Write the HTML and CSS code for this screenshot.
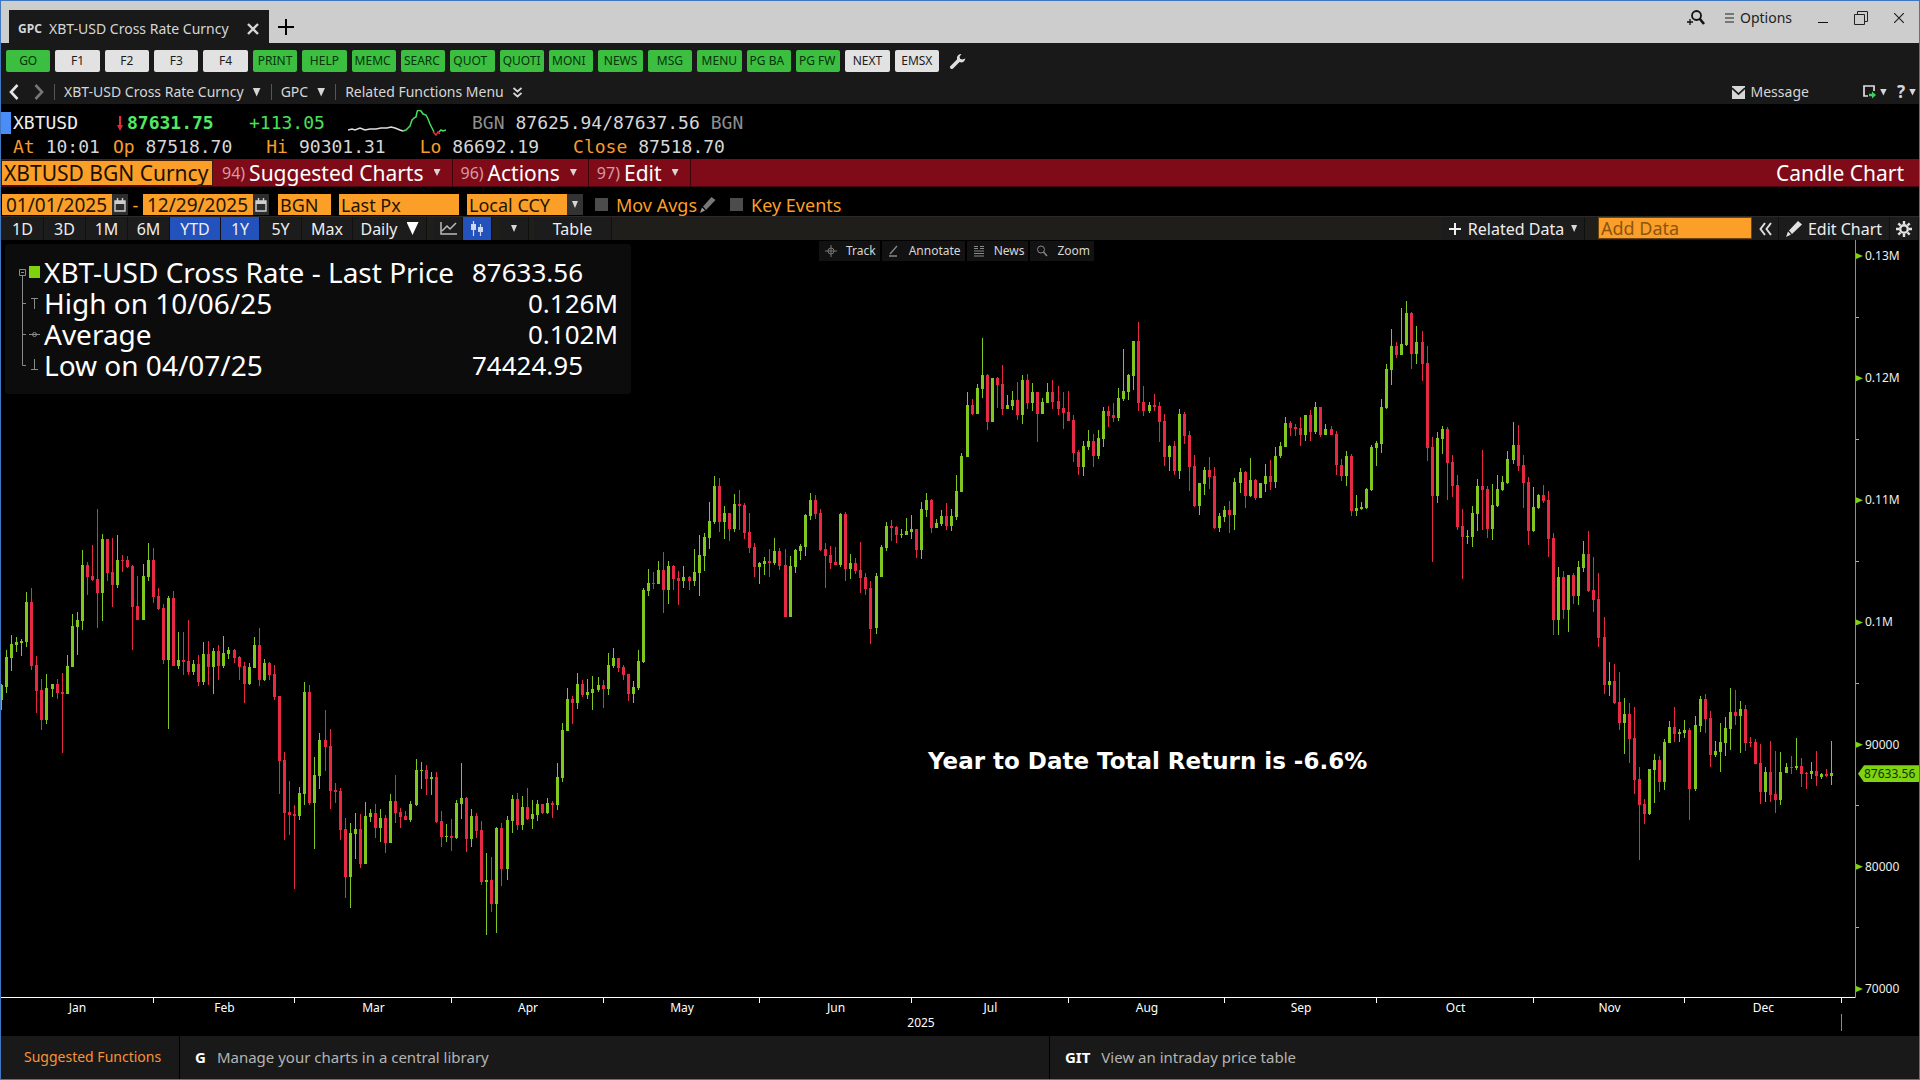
FILE: index.html
```html
<!DOCTYPE html>
<html lang="en">
<head>
<meta charset="utf-8">
<title>GPC XBT-USD Cross Rate Curncy</title>
<link rel="stylesheet" href="styles.css">
</head>
<body>
<div class="window">
  <header class="titlebar">
    <div class="tab">
      <strong class="tab-code">GPC</strong>
      <span class="tab-name">XBT-USD Cross Rate Curncy</span>
      <button class="icon-btn tab-close" aria-label="Close tab"><svg width="12" height="12" viewBox="0 0 12 12"><path d="M1 1L11 11M11 1L1 11" stroke="#d6d6d6" stroke-width="2.4"/></svg></button>
    </div>
    <button class="icon-btn tab-add" aria-label="New tab"><svg width="16" height="16" viewBox="0 0 16 16"><path d="M8 0V16M0 8H16" stroke="#000" stroke-width="2"/></svg></button>
    <div class="window-tools">
      <button class="icon-btn" aria-label="Find"><svg width="18" height="16" viewBox="0 0 18 16"><g fill="none" stroke="#111"><circle cx="9.500" cy="5.500" r="4.500" stroke-width="1.800"/><path d="M12.500 8.500L17 14" stroke-width="2.600"/><path d="M3 9V15M0 12H6" stroke-width="1.300"/></g></svg></button>
      <button class="options"><svg width="9" height="10" viewBox="0 0 9 10"><path d="M0 1H9M0 5H9M0 9H9" stroke="#222" stroke-width="1.200"/></svg>Options</button>
      <button class="icon-btn" aria-label="Minimize"><svg width="10" height="14" viewBox="0 0 10 14"><path d="M0 11.500H10" stroke="#111"/></svg></button>
      <button class="icon-btn" aria-label="Restore"><svg width="14" height="14" viewBox="0 0 14 14"><path d="M.5 3.500H10.500V13.500H.5ZM3.500 3V.5H13.500V10.500H11" fill="none" stroke="#222"/></svg></button>
      <button class="icon-btn" aria-label="Close"><svg width="10" height="10" viewBox="0 0 10 10"><path d="M0 0L10 10M10 0L0 10" stroke="#222" stroke-width="1.200"/></svg></button>
    </div>
  </header>

  <div class="keys">
    <div class="key-grid">
      <button class="key go">GO</button><button class="key">F1</button><button class="key">F2</button><button class="key">F3</button><button class="key">F4</button><button class="key go">PRINT</button><button class="key go">HELP</button><button class="key go cut">MEMC</button><button class="key go cut">SEARC</button><button class="key go cut">QUOT</button><button class="key go cut">QUOTI</button><button class="key go cut">MONI</button><button class="key go">NEWS</button><button class="key go">MSG</button><button class="key go">MENU</button><button class="key go cut">PG BA</button><button class="key go cut">PG FW</button><button class="key">NEXT</button><button class="key">EMSX</button>
    </div>
    <button class="icon-btn" aria-label="Settings"><svg width="16" height="16" viewBox="0 0 16 16"><path d="M1.800 14.200L8.500 7.500" stroke="#dedede" stroke-width="3.600" stroke-linecap="round"/><path d="M11.500 1A4.200 4.200 0 1 0 15.300 5.500L12.400 6.500L10 5.800L9.600 3.400Z" fill="#dedede"/></svg></button>
  </div>

  <nav class="crumbs">
    <button class="icon-btn back" aria-label="Back"><svg width="10" height="16" viewBox="0 0 10 16"><path d="M8.500 1L2 8L8.500 15" fill="none" stroke="#e4e4e4" stroke-width="2.600"/></svg></button>
    <button class="icon-btn forward" aria-label="Forward"><svg width="10" height="16" viewBox="0 0 10 16"><path d="M1.500 1L8 8L1.500 15" fill="none" stroke="#777" stroke-width="2.600"/></svg></button>
    <button class="crumb">XBT-USD Cross Rate Curncy<i class="caret"></i></button>
    <button class="crumb">GPC<i class="caret"></i></button>
    <button class="crumb">Related Functions Menu<svg width="9" height="11" viewBox="0 0 9 11"><path d="M.5 1L4.500 4.500L8.500 1M.5 6L4.500 9.500L8.500 6" fill="none" stroke="#d6d6d6" stroke-width="1.700"/></svg></button>
    <div class="crumb-tools">
      <button class="message"><svg width="13" height="13" viewBox="0 0 13 13"><path d="M0 0H13V13H0Z" fill="#d6d6d6"/><path d="M0 2L6.500 8L13 2" fill="none" stroke="#191919" stroke-width="1.700"/></svg>Message</button>
      <button class="menu-btn" aria-label="Export"><svg width="13" height="14" viewBox="0 0 13 14"><path d="M5 11H1V1H11V6" fill="none" stroke="#dedede" stroke-width="1.700"/><path d="M6 8.800H9V6.500L13 10L9 13.500V11.300H6Z" fill="#3fd05c"/></svg><i class="caret small"></i></button>
      <button class="menu-btn help"><b>?</b><i class="caret small"></i></button>
    </div>
  </nav>

  <section class="quote">
    <div class="quote-row">
      <i class="marker"></i><span class="q-symbol">XBTUSD</span>
      <svg class="down" width="6" height="15" viewBox="0 0 6 15"><path d="M3 0V12" stroke="#e32a36" stroke-width="2"/><path d="M0 9H6L3 15Z" fill="#e32a36"/></svg>
      <b class="q-last">87631.75</b><span class="q-change">+113.05</span>
      <svg class="spark" width="98" height="26" viewBox="0 0 98 26"><g fill="none" stroke-width="1.500"><path d="M0 20L4 19L7 20L12 18L17 20L22 19L28 19L33 18L39 18L43 17L47 18L52 20L55 21" stroke="#ddd"/><path d="M55 21L58 20L60 18L62 16L64 10L66 8L68 7L69 2L70 0L73 1L75 4L78 5L80 9L82 14L84 18L86 22M91 22L93 20L95 21L98 20" stroke="#45e05a"/><path d="M85 22L88 25L90 22L92 24" stroke="#e32a36"/></g></svg>
      <span class="dim">BGN</span><span>87625.94/87637.56</span><span class="dim">BGN</span>
    </div>
    <dl class="quote-row stats">
      <div><dt>At</dt><dd>10:01</dd></div>
      <div><dt>Op</dt><dd>87518.70</dd></div>
      <div><dt>Hi</dt><dd>90301.31</dd></div>
      <div><dt>Lo</dt><dd>86692.19</dd></div>
      <div><dt>Close</dt><dd>87518.70</dd></div>
    </dl>
  </section>

  <div class="menubar">
    <input class="security" aria-label="Security" value="XBTUSD BGN Curncy">
    <button class="menu"><span class="num">94)</span>Suggested Charts<i class="caret small"></i></button>
    <button class="menu"><span class="num">96)</span>Actions<i class="caret small"></i></button>
    <button class="menu"><span class="num">97)</span>Edit<i class="caret small"></i></button>
    <h1 class="page-name">Candle Chart</h1>
  </div>

  <form class="fields">
    <input class="field date" aria-label="From" value="01/01/2025"><button type="button" class="cal" aria-label="Pick start date"><svg width="12" height="14" viewBox="0 0 12 14"><path d="M1 3H11V13H1ZM3.500 0V4M8.500 0V4" fill="none" stroke="#cfcfcf" stroke-width="1.400"/><path d="M1 3H11V6H1Z" fill="#cfcfcf"/></svg></button>
    <span class="dash">-</span>
    <input class="field date" aria-label="To" value="12/29/2025"><button type="button" class="cal" aria-label="Pick end date"><svg width="12" height="14" viewBox="0 0 12 14"><path d="M1 3H11V13H1ZM3.500 0V4M8.500 0V4" fill="none" stroke="#cfcfcf" stroke-width="1.400"/><path d="M1 3H11V6H1Z" fill="#cfcfcf"/></svg></button>
    <input class="field source" aria-label="Source" value="BGN">
    <input class="field price" aria-label="Price type" value="Last Px">
    <label class="ccy"><select class="field" aria-label="Currency"><option>Local CCY</option></select><i class="drop"><i class="caret tiny"></i></i></label>
    <label class="check"><input type="checkbox">Mov Avgs<svg width="16" height="18" viewBox="0 0 16 18"><path d="M0 17L2 11.500L5 14.500Z" fill="#999"/><path d="M3 10.500L11.500 1L15.500 4L6 14Z" fill="#777"/></svg></label>
    <label class="check"><input type="checkbox">Key Events</label>
  </form>

  <div class="toolbar">
    <button class="tool w-s">1D</button><button class="tool w-s">3D</button><button class="tool w-s">1M</button><button class="tool w-s">6M</button><button class="tool w-m on">YTD</button><button class="tool w-n on">1Y</button><button class="tool w-s">5Y</button><button class="tool w-m">Max</button>
    <button class="tool daily">Daily<i class="caret large"></i></button>
    <button class="tool w-i" aria-label="Line chart"><svg width="17" height="13" viewBox="0 0 17 13"><path d="M1 0V12H17M2 9L7 4L10 7L16 1" fill="none" stroke="#bbb" stroke-width="1.500"/></svg></button><button class="tool w-i on" aria-label="Candle chart"><svg width="14" height="15" viewBox="0 0 14 15"><path d="M3.500 0V15M10.500 3V15" stroke="#cdd8ef" stroke-width="1.200"/><path d="M1 3H6V9H1ZM8 6H13V11H8Z" fill="#cdd8ef"/></svg></button>
    <button class="tool w-i more" aria-label="More"><i class="caret tiny"></i></button>
    <button class="tool table-btn">Table</button>
    <div class="toolbar-right">
      <button class="tool related"><svg width="12" height="12" viewBox="0 0 12 12"><path d="M6 0V12M0 6H12" stroke="#eee" stroke-width="2"/></svg>Related Data<i class="caret tiny"></i></button>
      <input class="add-data" aria-label="Add Data" placeholder="Add Data">
      <button class="tool collapse" aria-label="Collapse"><svg width="13" height="14" viewBox="0 0 13 14"><path d="M6 1L1.500 7L6 13M12 1L7.500 7L12 13" fill="none" stroke="#ddd" stroke-width="2"/></svg></button>
      <button class="tool edit"><svg width="16" height="16" viewBox="0 0 16 16"><path d="M0 16L2 10.500L5 13.500Z" fill="#e2e2e2"/><path d="M3 9.500L12 0L16 3.500L6 13Z" fill="#e2e2e2"/></svg>Edit Chart</button><button class="tool w-i" aria-label="Chart settings"><svg width="16" height="16" viewBox="0 0 16 16"><circle cx="8" cy="8" r="3.800" fill="none" stroke="#e2e2e2" stroke-width="2.400"/><path d="M8 0V3M8 13V16M0 8H3M13 8H16M2.300 2.300L4.500 4.500M11.500 11.500L13.700 13.700M13.700 2.300L11.500 4.500M4.500 11.500L2.300 13.700" stroke="#e2e2e2" stroke-width="2.400"/></svg></button>
    </div>
  </div>

  <main class="chart">
    <div class="plot">
      <svg class="candles" viewBox="1 240 1854 757" preserveAspectRatio="none" shape-rendering="crispEdges" role="img" aria-label="Daily candles of XBT-USD in 2025">
        <path id="up" class="up"/><path id="down" class="down-bars"/>
      </svg>
      <div class="chart-tools">
        <button><svg width="12" height="12" viewBox="0 0 12 12"><g fill="none" stroke="#777"><path d="M6 0V12M0 6H12"/><circle cx="6" cy="6" r="3"/></g></svg>Track</button>
        <button><svg width="12" height="12" viewBox="0 0 12 12"><path d="M2 9L9 1M1 11H9" fill="none" stroke="#888" stroke-width="1.300"/></svg>Annotate</button>
        <button><svg width="12" height="12" viewBox="0 0 12 12"><path d="M1 1.500H5M1 3.500H5M7 1.500H11M7 3.500H11M1 6H11M1 8.500H11M1 11H11" stroke="#888"/></svg>News</button>
        <button><svg width="12" height="12" viewBox="0 0 12 12"><circle cx="5" cy="4.500" r="3.500" fill="none" stroke="#888"/><path d="M7.500 7L11 11" stroke="#888" stroke-width="1.500"/></svg>Zoom</button>
      </div>
      <div class="legend">
        <svg width="25" height="124" viewBox="0 0 25 124"><g fill="none" stroke="#8a8a8a"><path d="M4.500 12.500H10.500V18.500H4.500ZM6 15.500H9M7.500 19V108.500H11M7.500 46.500H11M7.500 77.500H11"/><path d="M16 41.500H23M19.500 42V52M14 77.500H25M16 112.500H23M19.500 102V112"/><circle cx="19.500" cy="77.500" r="2"/></g><path d="M14 9H25V21H14Z" fill="#7fd30f"/></svg>
        <table>
          <tr><th>XBT-USD Cross Rate - Last Price</th><td>87633.56</td></tr>
          <tr><th>High on 10/06/25</th><td class="right">0.126M</td></tr>
          <tr><th>Average</th><td class="right">0.102M</td></tr>
          <tr><th>Low on 04/07/25</th><td>74424.95</td></tr>
        </table>
      </div>
      <p class="note">Year to Date Total Return is -6.6%</p>
    </div>
    <div class="price-axis">
      <ul>
        <li class="major">0.13M</li><li></li><li class="major">0.12M</li><li></li><li class="major">0.11M</li><li></li><li class="major">0.1M</li><li></li><li class="major">90000</li><li></li><li class="major">80000</li><li></li><li class="major">70000</li>
      </ul>
      <span class="flag">87633.56</span>
    </div>
    <div class="time-axis">
      <ol class="months"><li>Jan</li><li>Feb</li><li>Mar</li><li>Apr</li><li>May</li><li>Jun</li><li>Jul</li><li>Aug</li><li>Sep</li><li>Oct</li><li>Nov</li><li>Dec</li></ol>
      <div class="year">2025</div>
    </div>
  </main>

  <footer class="footer">
    <span class="suggest">Suggested Functions</span>
    <a href="#g"><b>G</b>Manage your charts in a central library</a>
    <a href="#git"><b>GIT</b>View an intraday price table</a>
  </footer>
</div>
<script src="chart.js"></script>
</body>
</html>
```
FILE: styles.css
```css
* { box-sizing: border-box; margin: 0; padding: 0; }
body { background: #000; color: #d6d6d6; font: 14px/20px "Noto Sans", sans-serif; }
button, input, select { font: inherit; color: inherit; background: none; border: 0; border-radius: 0; }
button { cursor: pointer; white-space: nowrap; }
ul, ol { list-style: none; }
svg { display: block; flex: none; }

.window { display: flex; flex-direction: column; height: 100vh; min-height: 600px; border: 1px solid #3f78c0; }
.icon-btn { display: flex; align-items: center; justify-content: center; }
.caret { width: 8px; height: 9px; background: #d6d6d6; clip-path: polygon(0 0, 100% 0, 50% 100%); flex: none; }
.caret.small { width: 7px; height: 7px; }
.caret.tiny { width: 6px; height: 7px; }
.caret.large { width: 12px; height: 13px; background: #fff; }

.titlebar { display: flex; align-items: flex-end; height: 42px; padding-left: 8px; background: #cdcdcd; }
.tab { display: flex; align-items: center; width: 260px; height: 33px; padding: 4px 10px 0 9px; background: #191919; }
.tab-code { width: 31px; font-size: 12px; }
.tab-name { flex: 1; white-space: nowrap; }
.tab-add { align-self: center; margin: 10px 0 0 9px; }
.window-tools { display: flex; align-items: center; align-self: flex-start; height: 34px; margin-left: auto; padding-right: 15px; gap: 26px; color: #222; }
.options { display: flex; align-items: center; gap: 6px; margin-left: -6px; }

.keys { display: flex; align-items: center; gap: 11px; height: 37px; padding: 0 0 1px 5px; background: #191919; }
.key-grid { display: grid; grid-template-columns: repeat(19, 1fr); gap: 5px; width: 933px; }
.key { height: 22px; padding: 0 4px; border-radius: 2px; overflow: hidden; background: #e2e2e2; color: #1c1c1c; font-size: 12px; line-height: 22px; text-align: center; }
.key.go { background: #3cbf41; color: #06330a; }
.key.cut { padding: 0 2px 0 3px; text-align: left; }

.crumbs { display: flex; align-items: center; height: 24px; padding-left: 8px; background: #191919; }
.back { margin-right: 15px; }
.forward { margin-right: 10px; }
.crumb { display: flex; align-items: center; gap: 9px; height: 16px; padding: 0 10px 0 9px; border-left: 1px solid #555; }
.crumb-tools { display: flex; align-items: center; margin-left: auto; padding-right: 3px; gap: 10px; }
.message { display: flex; align-items: center; gap: 6px; margin-right: 44px; }
.menu-btn { display: flex; align-items: center; gap: 4px; }
.help b { font-size: 17px; }

.quote { height: 55px; padding: 7px 0 0; font: 18px/24px "DejaVu Sans Mono", monospace; }
.quote-row { display: flex; align-items: center; height: 24px; white-space: nowrap; }
.marker { width: 10px; height: 22px; background: #4a8df6; margin-right: 2px; }
.q-symbol { width: 104px; color: #eee; }
.q-last { width: 122px; margin-left: 4px; color: #54e863; }
.q-change { width: 99px; color: #4be05c; }
.dim { color: #8e8e8e; }
.spark { margin-right: 26px; }
.spark ~ span { margin-right: 11px; }
.stats { gap: 34px; padding-left: 12px; }
.stats div { display: flex; gap: 11px; }
.stats div:first-child { margin-right: -21px; }
.stats dt { color: #f89c2a; }

.menubar { display: flex; align-items: center; height: 28px; background: #7f0b19; font-size: 21px; line-height: 26px; color: #fff; border-bottom: 1px solid #450810; }
.security { width: 212px; height: 26px; margin-right: 1px; padding: 0 2px; background: #fb9f28; border: 1px solid #3c1c08; color: #1a1000; }
.menu { display: flex; align-items: center; height: 27px; padding: 0 11px 0 8px; gap: 10px; border-right: 1px solid #3d050c; }
.num { font-size: 16px; color: #d79aa0; margin-right: -6px; }
.page-name { margin-left: auto; padding-right: 15px; font-size: 21px; font-weight: 400; }

.fields { display: flex; align-items: flex-end; height: 29px; padding: 0 1px 1px; color: #fb9f28; font-size: 18px; line-height: 20px; }
.field { height: 21px; padding: 0 2px; background: #fb9f28; color: #241500; }
.date { width: 110px; padding: 0 4px; font-size: 19px; }
.cal { display: flex; align-items: center; justify-content: center; width: 16px; height: 21px; background: #2d2d2d; }
.dash { width: 15px; text-align: center; }
.source { width: 53px; margin-left: 9px; }
.price { width: 120px; margin: 0 8px; }
.ccy { display: flex; margin-right: 12px; }
.ccy .field { width: 100px; appearance: none; }
.drop { display: flex; align-items: center; justify-content: center; width: 16px; height: 21px; background: #333; }
.check { display: flex; align-items: center; gap: 8px; height: 21px; margin-right: 14px; white-space: nowrap; }
.check svg { margin-left: -5px; }
.check input { appearance: none; width: 13px; height: 13px; background: #4c4c4c; }

.toolbar { display: flex; height: 24px; padding-left: 1px; background: #1f1e1a; border-top: 1px solid #2c2a26; font-size: 16px; line-height: 22px; color: #eee; }
.tool { display: flex; align-items: center; justify-content: center; height: 23px; background: #1c1c1c; border-right: 1px solid #101010; }
.tool.on { background: #2352bd; }
.w-n { width: 39px; }
.w-s { width: 42px; }
.w-m { width: 51px; }
.w-i { width: 29px; }
.daily { width: 74px; gap: 9px; margin-right: 7px; }
.more { margin: 0 5px 0 8px; }
.table-btn { width: 78px; }
.toolbar-right { display: flex; margin-left: auto; }
.related { width: 143px; gap: 7px; margin-right: 13px; }
.add-data { width: 154px; height: 22px; padding: 0 2px; background: #fb9f28; border: 1px solid #6d4310; font-size: 18px; color: #241500; }
.add-data::placeholder { color: #8a5512; opacity: 1; }
.collapse { width: 27px; }
.edit { width: 111px; gap: 6px; }

.chart { flex: 1; min-height: 0; display: grid; grid-template-columns: 1fr 64px; grid-template-rows: 1fr 38px; }
.plot { position: relative; min-height: 0; border-bottom: 1px solid #fff; }
.candles { width: 100%; height: 100%; position: absolute; inset: 0; }
.up { fill: #80c820; }
.down-bars { fill: #e62a44; }
.chart-tools { position: absolute; left: calc(50% - 109px); top: 1px; display: flex; gap: 2px; font-size: 12px; }
.chart-tools button { display: flex; align-items: center; gap: 9px; height: 20px; padding: 0 4px 0 6px; background: #121212; }
.legend { position: absolute; left: 4px; top: 4px; display: flex; gap: 4px; width: 626px; height: 150px; padding: 13px 13px 13px 10px; background: #0c0c0c; border-radius: 3px; color: #fff; font-size: 26px; line-height: 31px; }
.legend table { flex: 1; border-collapse: collapse; height: 124px; }
.legend th { font-size: 28px; font-weight: 400; text-align: left; white-space: nowrap; }
.legend td { width: 146px; }
.legend .right { text-align: right; }
.note { position: absolute; left: 50%; top: 67%; color: #fff; font: bold 23px/28px "DejaVu Sans", sans-serif; white-space: nowrap; }

.price-axis { position: relative; border-left: 1px solid #6fb812; font-size: 12px; line-height: 18px; color: #eee; }
.price-axis ul { display: flex; flex-direction: column; justify-content: space-between; height: 100%; padding-top: 7px; }
.price-axis li { display: flex; align-items: center; gap: 6px; height: 18px; }
.price-axis li::before { content: ""; width: 3px; height: 1px; background: #9bb88a; }
.price-axis .major { gap: 2px; }
.price-axis .major::before { width: 7px; height: 6px; background: #7fd30f; clip-path: polygon(0 0, 100% 50%, 0 100%); }
.flag { position: absolute; left: 2px; right: 0; top: 69.3%; height: 17px; padding-left: 6px; line-height: 17px; background: #7fd30f; color: #12300a; clip-path: polygon(0 50%, 6px 0, 100% 0, 100% 100%, 6px 100%); }

.time-axis { grid-column: 1 / -1; padding-right: 77px; font-size: 12px; line-height: 16px; color: #fff; text-align: center; }
.months { display: grid; grid-template-columns: 153fr 141fr 157fr 152fr 156fr 152fr 157fr 156fr 152fr 157fr 151fr 157fr; height: 16px; line-height: 20px; }
.months li { position: relative; }
.months li::after { content: ""; position: absolute; right: 0; top: 0; width: 1px; height: 5px; background: #fff; }
.year { height: 17px; line-height: 18px; border-right: 1px solid #888; }

.footer { display: flex; height: 43px; background: #191919; font-size: 15px; line-height: 42px; }
.suggest { width: 178px; padding-left: 23px; font-size: 14px; color: #f8923a; }
.footer a { flex: 1; padding-left: 15px; border-left: 1px solid #000; color: #b4b4b4; text-decoration: none; }
.footer b { margin-right: 11px; color: #fff; }
```
FILE: chart.js
```js
// Daily bars: colour, high, body top, body bottom, low, in thirds of a plot unit
// measured down from the base of each run.
const runs = [
  [480, `g612 615 660 690,g510 531 621 638,g465 492 534 573,g471 486 495 516,g477 483 488 528,g336 366 486 500,r325 366 558 570,r528 555 633 699,r597 630 720 750,g582 624 720 732,g612 612 627 651,r597 612 639 657,r579 636 642 819,g525 558 642 642,g402 438 561 561,g396 420 441 525,g210 255 423 450,r246 255 291 345,r195 288 300 303,r87 297 339 444,g162 177 339 423,r177 177 279 303,r174 276 315 381,g165 240 315 324,r225 240 243 276,r228 240 261 264,r255 258 381 510,r288 378 420 420,g252 288 420 420,g189 240 291 303,r204 240 351 368,r324 348 387 390,r372 384 540 552,g348 354 540 747,r333 354 558 558,g456 540 558 567,r456 540 546 585,r420 543 576 585,g540 552 576 585,r525 552 606 618,g486 522 606 615,r483 522 561 615,g504 513 561 642,r495 513 558 600,g468 519 558 564,g501 510 522 537,r507 510 534 549,r528 531 561 600,r546 558 612 669,g549 561 612 615,g471 495 564 564,r444 495 600 618,g537 549 600 603,r546 549 585 600,r555 582 651 660,r648 648 843 942,r816 840 999 1080,r903 996 1005 1065,r975 1002 1008 1228,g921 939 1008 1020,g606 636 942 975,r615 636 969 975,g831 885 969 1107,g759 780 888 927,r690 780 801 873,r747 798 933 987,r909 930 936 969,r924 933 1050 1080,r1014 1047 1191 1254,g1029 1059 1191 1284,g999 1047 1062 1137,r1002 1047 1152 1164,g966 1008 1152 1152,g987 999 1011 1026,r972 999 1044 1074,g987 1014 1044 1086,r1005 1014 1089 1119,g942 963 1089 1089,r885 963 999 1029`],
  [440, `r1104 1116 1131 1164,r1113 1128 1140 1140,g1083 1092 1140 1146,g957 990 1095 1098,g966 990 993 1047,r975 990 1017 1065,g996 1011 1017 1065,r996 1011 1146 1149,r1113 1143 1191 1221,g1152 1188 1191 1206,r1137 1188 1194 1233,g1080 1089 1194 1197,g969 1074 1092 1137,r1071 1074 1197 1236,g1107 1128 1197 1221,r1119 1128 1173 1194,r1143 1170 1326 1335,g1239 1320 1326 1485,r1251 1320 1392 1416,g1161 1164 1392 1479,r1149 1164 1287 1338,g1128 1140 1287 1320,g1065 1077 1143 1179,r1059 1077 1155 1170,g1068 1101 1155 1170,r1044 1101 1137 1140,g1080 1122 1137 1167,g1080 1092 1125 1143,r1092 1092 1119 1122,g1074 1089 1119 1122,r1083 1089 1095 1134,g969 1011 1095 1110,g849 870 1014 1026,g744 777 873 873,r768 777 789 852,g699 732 789 807,r720 732 765 771,g717 756 765 777,g708 747 759 810,g711 735 750 756,r720 735 747 804,g639 675 747 765,g624 654 678 684,r654 654 684 696,r675 681 705 720,r702 702 762 783,g723 741 762 789,g630 663 744 750,g444 450 666 669,g387 429 453 468,r396 429 432 447,g363 390 432 432,r336 390 450 519,g363 378 450 492,r375 378 417 450,r393 414 423 495,g378 411 423 444,r408 411 423 450,g327 396 423 438,g285 345 399 468,g279 291 348 393,g186 243 294 327,g108 138 246 252,r114 138 246 276,g198 219 246 297,r219 219 267 303,g162 192 267 276,r150 192 198 270,r189 195 279 297,r219 276 324 339,r309 321 381 411,g366 369 381 432,g351 363 372 405,r327 363 369 411,g294 333 369 375,r324 333 378 390,r327 375 531 531,g348 378 531 531,g327 330 381 399`],
  [300, `g732 738 753 780,g642 645 741 768,g579 600 648 660,r585 600 642 657,r627 639 750 753,r729 747 768 864,r738 765 789 807,r741 786 795 795,g639 642 795 801,r636 642 807 843,g762 789 807 837,r774 789 813 822,r726 810 834 879,r819 831 867 885,r843 864 987 1032,g819 828 984 1002,g735 741 831 831,g666 678 744 753,r660 678 684 723,r678 681 705 729,g687 702 705 714,g654 693 705 705,g645 687 696 717,r687 687 750 774,g606 627 750 777,g579 600 630 651,r597 600 684 699,g657 669 684 684,g630 648 672 678,r609 648 678 690,g627 648 678 693,g525 573 651 660,g459 468 576 576,g276 315 471 471,r297 315 342 345,g252 264 342 342,g114 225 267 294,r222 225 366 390,g234 234 366 366,r231 234 255 324,r195 252 327 345,g285 315 327 327,g273 300 318 330,r246 300 345 360,g225 240 345 372,r222 240 309 327,g249 276 309 333,r276 276 342 426,g294 306 342 342,g249 276 309 309,r240 276 306 327,r258 303 327 345,r276 324 339 387,r273 336 363 363,r345 360 459 486,r450 456 501 525,g423 438 501 528,g390 423 441 450,r402 423 468 501,g390 414 468 477,g321 333 417 441,r318 333 348 381,r309 345 354 366,g264 294 354 363,g147 273 297 303,g222 225 276 300,g123 123 228 270,r66 123 309 333,r258 306 333 348,g306 315 333 339,r282 315 321 333,r306 318 366 426,r342 363 471 498,g435 438 471 513,r423 438 513 525,g327 342 513 537,r336 342 408 432,r393 405 501 573,r465 498 618 621`],
  [280, `g609 609 678 705,g561 570 612 645,r531 570 591 627,r561 588 744 747,g699 708 744 756,g678 690 711 726,r663 690 705 759,g594 606 705 750,g564 576 609 639,r573 576 648 684,g534 600 648 651,r597 600 654 660,g609 609 654 654,g552 588 612 636,r540 588 606 630,g501 528 606 624,g486 498 528 534,g411 429 501 501,r423 429 444 468,r432 441 447 468,r411 444 465 498,g405 405 465 483,r390 405 456 483,g366 381 456 462,r381 381 465 471,g432 447 465 465,r438 447 465 465,r453 462 555 585,r537 555 588 603,g513 528 588 618,r522 528 693 708,g645 684 693 708,g666 681 687 690,g624 627 684 687,g495 501 630 633,g483 489 504 558,g357 381 492 519,g252 267 384 387,g147 198 270 315,r186 198 225 234,g84 192 225 225,g63 99 195 198,r96 99 222 267,g138 186 222 252,r153 186 252 303,r198 249 504 543,r471 501 648 846,g456 474 648 669,g438 447 477 522,r441 447 549 660,r525 546 618 651,r585 615 741 750,r687 738 771 897,g750 768 771 792,g678 699 771 801,g597 618 702 753,r510 618 630 750,r618 627 747 774,g612 675 747 780,g585 627 678 681,g588 606 630 633,g513 537 609 612,g426 495 540 552,r435 495 558 573,r525 555 609 684,r591 606 753 795,g621 681 753 756,g642 645 684 687,r615 645 663 669,r633 660 777 831`],
  [420, `r339 354 600 645,g441 471 600 645,r453 471 570 597,g465 465 570 636,r459 465 528 552,g423 441 528 555,g363 402 444 456,r333 402 513 516,r411 510 540 576,r459 537 654 681,r591 651 795 822,g726 783 795 828,r732 783 849 852,r756 846 909 930,g834 882 909 1002,r849 882 957 1029,r861 954 1080 1122,r1041 1077 1155 1320,r1137 1152 1182 1212,g1047 1047 1182 1185,g1002 1020 1050 1149,r1008 1020 1086 1116,g957 966 1086 1110,g903 921 969 969,r861 921 942 966,g927 936 942 966,g900 930 939 954,r924 930 1107 1200,g888 915 1107 1113,g828 837 918 936,r822 837 897 939,r873 894 1005 1041,g963 993 1005 1011,g909 966 996 1056,g891 924 969 1008,g804 876 927 990,r810 876 888 915,g843 867 888 999,r855 867 969 993,r951 966 969 981,r957 966 1032 1032,r972 1029 1116 1152,g1041 1056 1116 1146,r963 1056 1125 1146,r993 1122 1140 1179,g996 1056 1140 1155,g1029 1041 1059 1059,r1008 1041 1044 1062,g954 1038 1044 1050,r1014 1038 1062 1101,r1056 1059 1062 1107,g1026 1053 1062 1077,r993 1053 1068 1098,g1059 1062 1071 1077,r1047 1062 1068 1071,g963 1059 1068 1095`]
];

const STEP = 5.0553;
const START = 1.48;
const paths = { g: "", r: "" };
let day = 0;

for (const [base, text] of runs) {
  for (const bar of text.split(",")) {
    const [high, top, bottom, low] = bar.slice(1).split(" ").map(v => base + Math.round(v / 3));
    const x = Math.floor(START + STEP * day++);
    paths[bar[0]] += `M${x} ${high}h1V${low}h-1ZM${x - 1} ${top}h3V${Math.max(bottom, top + 1)}h-3Z`;
  }
}

document.getElementById("up").setAttribute("d", paths.g);
document.getElementById("down").setAttribute("d", paths.r);
```
